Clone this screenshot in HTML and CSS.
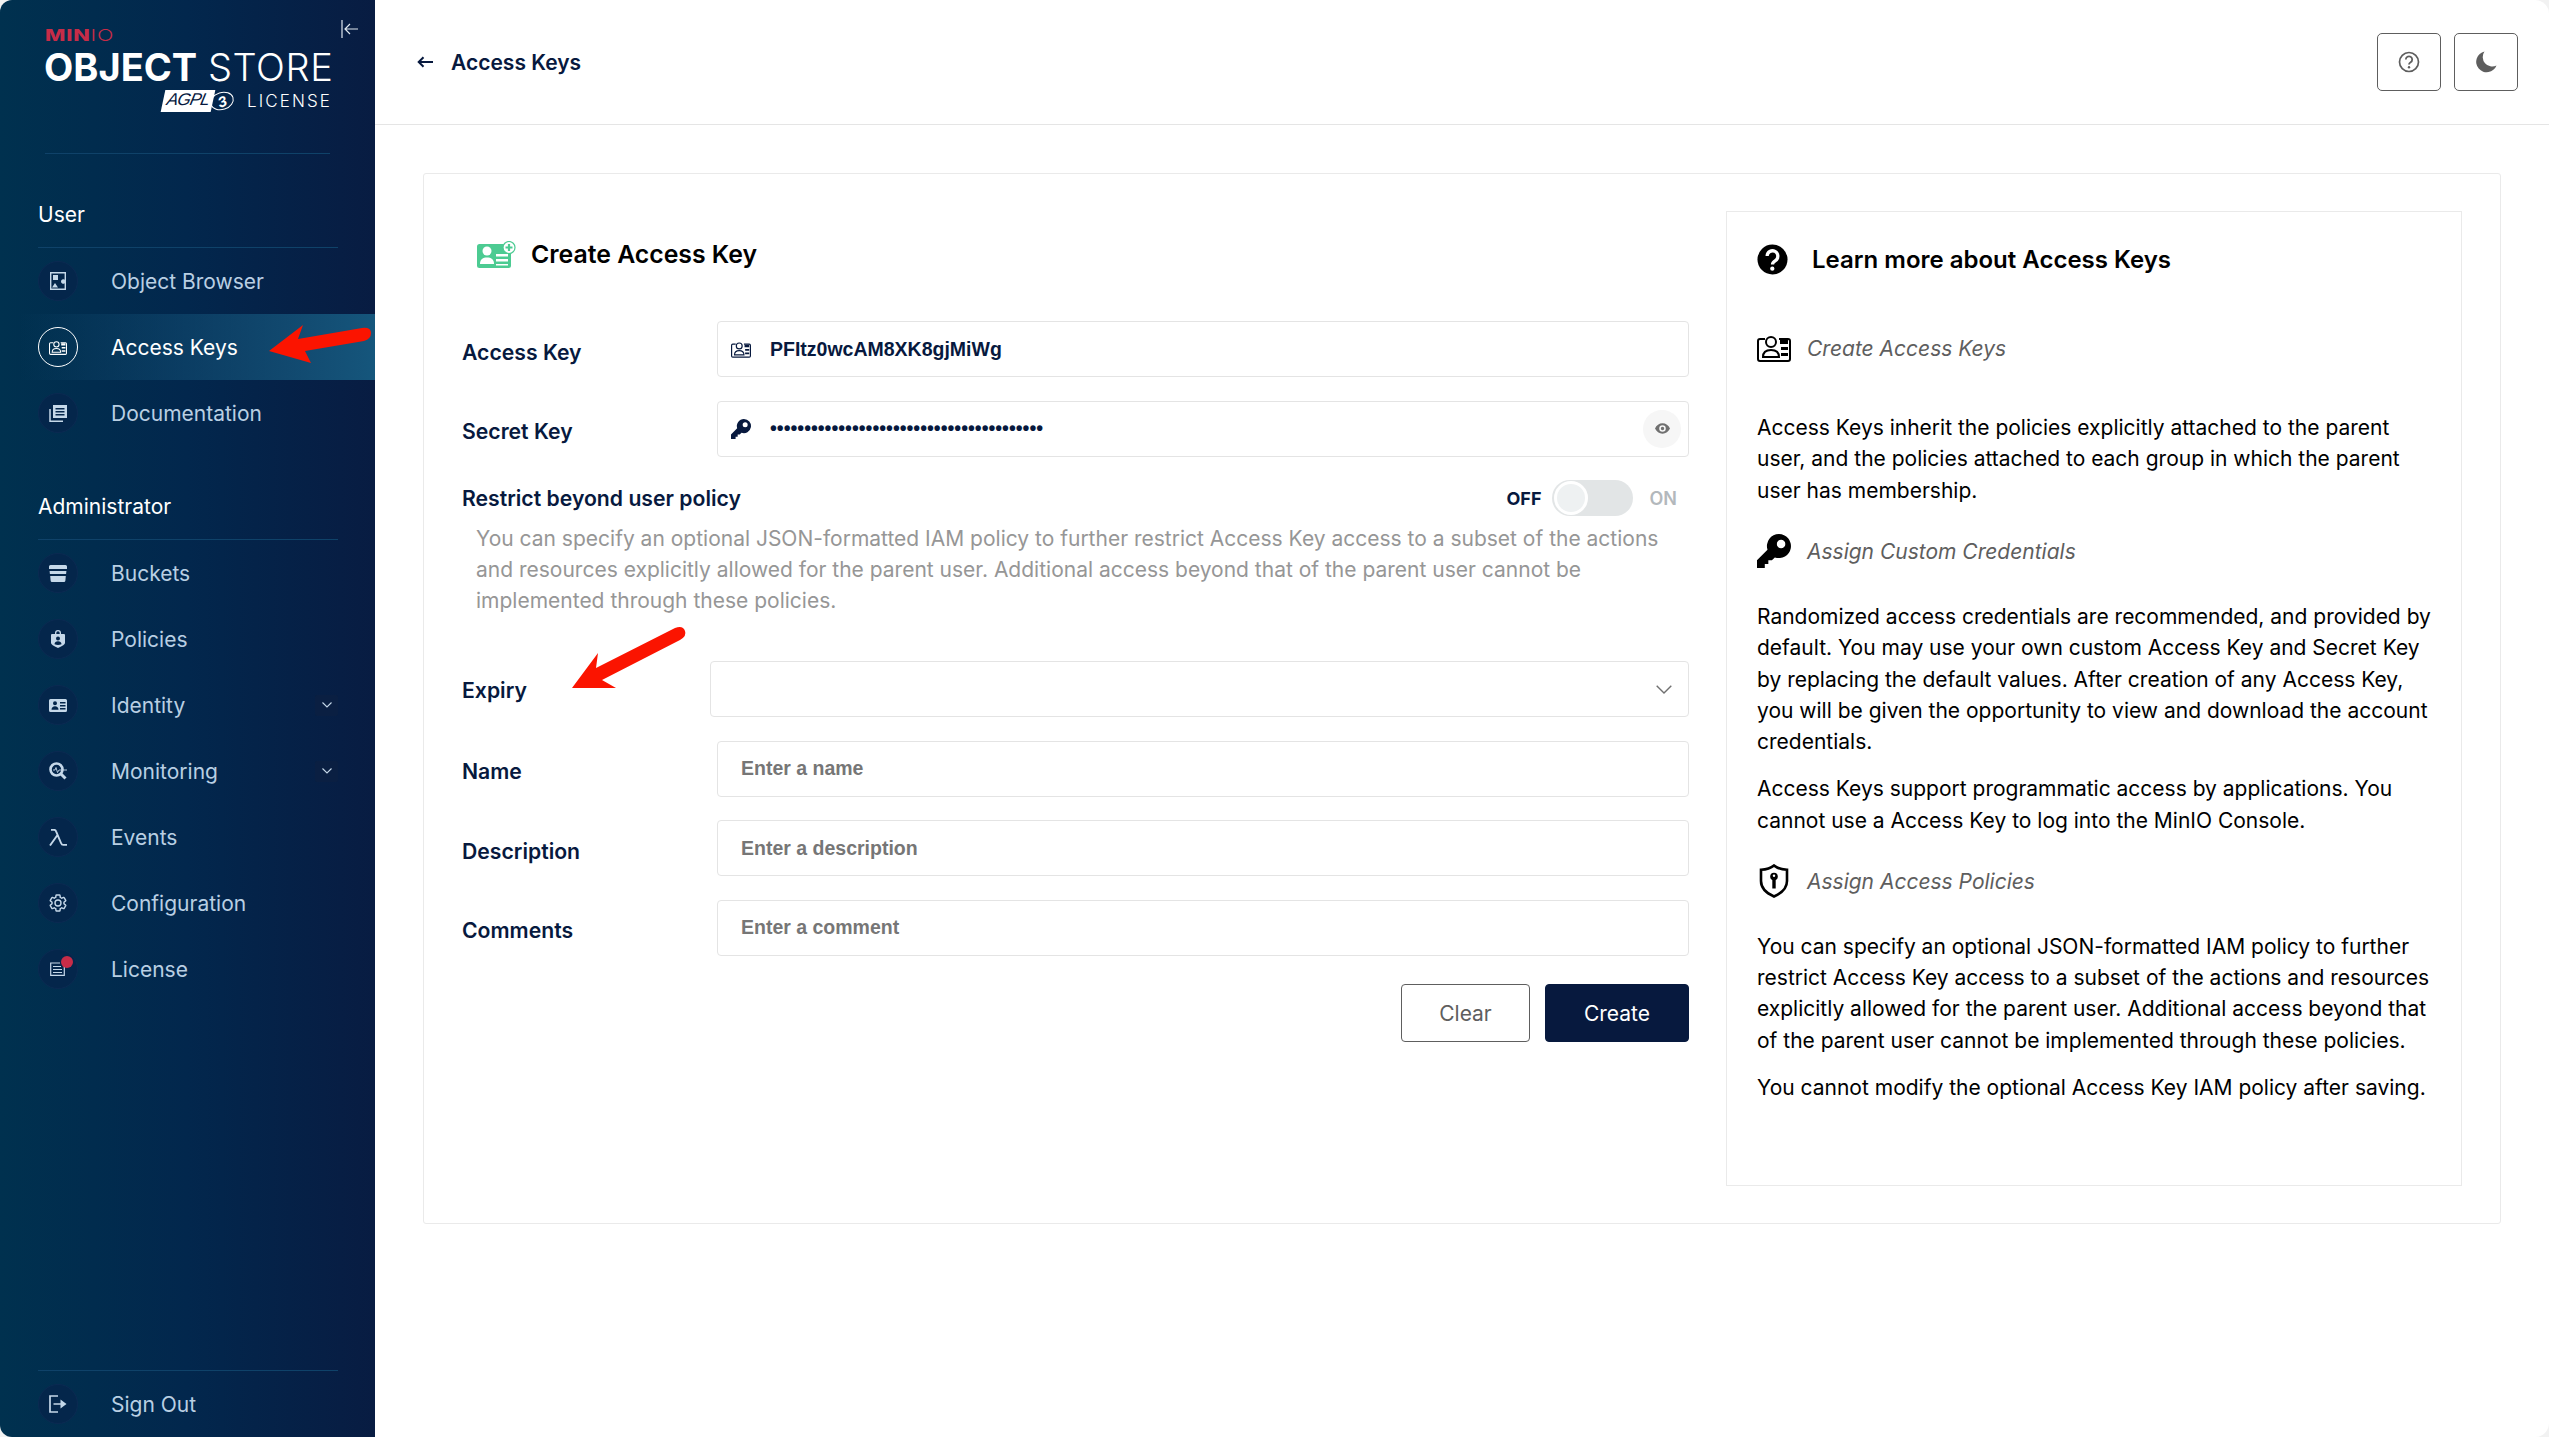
FILE: index.html
```html
<!DOCTYPE html>
<html lang="en">

<head>
    <meta charset="UTF-8">
    <meta name="viewport" content="width=device-width, initial-scale=1.0">
    <title>MinIO Console - Access Keys</title>
    <link rel="stylesheet" href="styles.css">
</head>

<body>
    <svg class="icon-defs" width="0" height="0">
        <symbol id="i-card" viewBox="0 0 34 28">
            <path d="M8 5H3a2 2 0 0 0-2 2v18a2 2 0 0 0 2 2h28a2 2 0 0 0 2-2V7a2 2 0 0 0-2-2h-9" fill="none" stroke="currentColor" stroke-width="2" />
            <circle cx="14" cy="8" r="5" fill="none" stroke="currentColor" stroke-width="2" />
            <path d="M6 23c0-5 3-7 8-7s8 2 8 7z" fill="none" stroke="currentColor" stroke-width="2" />
            <path d="M23 6h8v4h-8zM24 13h7v3h-7zM24 19h7v3h-7z" fill="currentColor" />
        </symbol>
        <symbol id="i-key" viewBox="0 0 24 24">
            <path fill="currentColor" fill-rule="evenodd" d="M15.5 0a8.5 8.5 0 1 1-2.9 16.5L10.5 18.6H8v2.6H5.5V24H0v-5.5l7.4-7.4A8.5 8.5 0 0 1 15.5 0zM17 4a3 3 0 1 0 0 6 3 3 0 0 0 0-6z" />
        </symbol>
    </svg>

    <div class="app">
        <aside class="sidebar">
            <svg class="collapse" viewBox="0 0 18 18" width="18" height="18">
                <path d="M1 0v18M17 9H4M9 4L4 9l5 5" fill="none" stroke="currentColor" stroke-width="1.2" />
            </svg>
            <div class="logo">
                <div class="logo-minio"><b>MIN</b>IO</div>
                <div class="logo-name"><b>OBJECT</b> <span>STORE</span></div>
                <div class="logo-license">
                    <span class="agpl"><span>AGPL</span></span>
                    <span class="agpl-three">3</span>
                    <span class="license-text">LICENSE</span>
                </div>
            </div>

            <div class="menu-title">User</div>
            <a class="nav-item">
                <span class="nav-icon">
                    <svg viewBox="0 0 16 18" width="16" height="18">
                        <path d="M.7.7h14.6v16.6H.7z" fill="none" stroke="currentColor" stroke-width="1.4" />
                        <path d="M3 3h5v5H3zM11 9.500a2.300 2.300 0 1 1 0 .1zM5 11l3 4.500H2z" fill="currentColor" />
                    </svg>
                </span>
                Object Browser
            </a>
            <a class="nav-item active">
                <span class="nav-icon">
                    <svg width="18" height="15">
                        <use href="#i-card" />
                    </svg>
                </span>
                Access Keys
            </a>
            <a class="nav-item">
                <span class="nav-icon">
                    <svg viewBox="0 0 18 18" width="18" height="18">
                        <path d="M1 5v12.200h13" fill="none" stroke="currentColor" stroke-width="1.500" />
                        <path fill="currentColor" fill-rule="evenodd" d="M4 1h14v13H4zM6.500 4v1.500h9V4zM6.500 7v1.500h9V7zM6.500 10v1.500h9V10z" />
                    </svg>
                </span>
                Documentation
            </a>

            <div class="menu-title admin-title">Administrator</div>
            <a class="nav-item">
                <span class="nav-icon">
                    <svg viewBox="0 0 18 17" width="18" height="17">
                        <path fill="currentColor" d="M0 1.500Q0 0 1.500 0h15Q18 0 18 1.500V4H0zM.6 6h16.800l-.3 3H.9zM1.200 11h15.600l-.4 4.500Q16.300 17 15 17H3q-1.300 0-1.400-1.500z" />
                    </svg>
                </span>
                Buckets
            </a>
            <a class="nav-item">
                <span class="nav-icon">
                    <svg viewBox="0 0 14 18" width="14" height="18">
                        <path fill="currentColor" fill-rule="evenodd" d="M4 4V3a3 3 0 0 1 6 0v1h3q1 0 1 1v8q0 2-7 5-7-3-7-5V5q0-1 1-1zm1.300 0h3.400V3a1.700 1.700 0 0 0-3.400 0zM7 6.500a2 2 0 1 0 0 4 2 2 0 0 0 0-4zM3.500 14.300q3.500 1.500 7 0c0-2-1.500-3-3.500-3s-3.500 1-3.500 3z" />
                    </svg>
                </span>
                Policies
            </a>
            <a class="nav-item">
                <span class="nav-icon">
                    <svg viewBox="0 0 18 13" width="18" height="13">
                        <path fill="currentColor" fill-rule="evenodd" d="M1.500 0h15Q18 0 18 1.500v10q0 1.500-1.500 1.500h-15Q0 13 0 11.500v-10Q0 0 1.500 0zM6 2.200a2 2 0 1 0 0 4 2 2 0 0 0 0-4zM2.500 10.800h7c0-2-1.500-3.500-3.500-3.500s-3.500 1.500-3.500 3.500zM11 3v1.500h5.500V3zM11 6v1.500h5.500V6zM11 9v1.500h5.500V9z" />
                    </svg>
                </span>
                Identity
                <span class="nav-chevron">
                    <svg viewBox="0 0 10 6" width="10" height="6">
                        <path d="M.5.500L5 5 9.500.500" fill="none" stroke="currentColor" stroke-width="1.100" />
                    </svg>
                </span>
            </a>
            <a class="nav-item">
                <span class="nav-icon">
                    <svg viewBox="0 0 18 18" width="18" height="18">
                        <circle cx="7.500" cy="7.500" r="6" fill="none" stroke="currentColor" stroke-width="2.600" />
                        <path d="M11.500 11.500l5 5" stroke="currentColor" stroke-width="3" />
                        <path d="M4 8h2l1-2.500 1.500 5L10 8h8" fill="none" stroke="currentColor" stroke-width=".9" />
                    </svg>
                </span>
                Monitoring
                <span class="nav-chevron">
                    <svg viewBox="0 0 10 6" width="10" height="6">
                        <path d="M.5.500L5 5 9.500.500" fill="none" stroke="currentColor" stroke-width="1.100" />
                    </svg>
                </span>
            </a>
            <a class="nav-item">
                <span class="nav-icon">
                    <svg viewBox="0 0 18 17" width="18" height="17">
                        <path d="M2 .8h3q1.500 0 2.200 1.800L12 14q.7 1.900 2.200 1.900H18M8.500 6L1 16.500" fill="none" stroke="currentColor" stroke-width="1.900" />
                    </svg>
                </span>
                Events
            </a>
            <a class="nav-item">
                <span class="nav-icon">
                    <svg viewBox="0 0 24 24" width="20" height="20">
                        <path fill="none" stroke="currentColor" stroke-width="1.700" d="M19.140 12.940c.04-.3.06-.61.06-.94 0-.32-.02-.64-.07-.94l2.030-1.580c.18-.14.23-.41.12-.61l-1.920-3.320c-.12-.22-.37-.29-.59-.22l-2.390.96c-.5-.38-1.030-.7-1.620-.94l-.36-2.540c-.04-.24-.24-.41-.48-.41h-3.840c-.24 0-.43.17-.47.41l-.36 2.540c-.59.24-1.130.57-1.620.94l-2.390-.96c-.22-.08-.47 0-.59.22L2.740 8.870c-.12.21-.08.47.12.61l2.030 1.580c-.05.3-.09.63-.09.94s.02.64.07.94l-2.030 1.580c-.18.14-.23.41-.12.61l1.920 3.320c.12.22.37.29.59.22l2.390-.96c.5.38 1.030.7 1.620.94l.36 2.540c.05.24.24.41.48.41h3.840c.24 0 .44-.17.47-.41l.36-2.540c.59-.24 1.130-.56 1.620-.94l2.390.96c.22.08.47 0 .59-.22l1.920-3.320c.12-.22.07-.47-.12-.61l-2.010-1.580zM12 15.600c-1.980 0-3.600-1.620-3.600-3.600s1.620-3.600 3.600-3.600 3.600 1.620 3.600 3.600-1.620 3.600-3.600 3.600z" />
                    </svg>
                </span>
                Configuration
            </a>
            <a class="nav-item">
                <span class="nav-icon">
                    <svg viewBox="0 0 16 14" width="16" height="14">
                        <path d="M10 1H.7v12.300h13.600V5M3 4.500h8M3 7.500h9M3 10.500h9" fill="none" stroke="currentColor" stroke-width="1.200" />
                    </svg>
                    <span class="nav-badge"></span>
                </span>
                License
            </a>

            <div class="sidebar-footer">
                <a class="nav-item">
                    <span class="nav-icon">
                        <svg viewBox="0 0 18 18" width="18" height="18">
                            <path d="M9 1H1v16h8M4.500 9H15" fill="none" stroke="currentColor" stroke-width="1.700" />
                            <path d="M11.500 4.500L17.500 9l-6 4.500z" fill="currentColor" />
                        </svg>
                    </span>
                    Sign Out
                </a>
            </div>
        </aside>

        <main class="main">
            <header class="page-header">
                <svg class="back-arrow" viewBox="0 0 16 12" width="16" height="12">
                    <path d="M16 6H2M6.500 1.200L1.700 6l4.800 4.800" fill="none" stroke="currentColor" stroke-width="2" />
                </svg>
                <span class="page-title">Access Keys</span>
                <div class="header-actions">
                    <button class="icon-button">
                        <svg viewBox="0 0 22 22" width="22" height="22">
                            <circle cx="11" cy="11" r="9.500" fill="none" stroke="currentColor" stroke-width="1.700" />
                            <path d="M7.800 8.500a3.200 3.200 0 1 1 4.800 2.800c-1 .6-1.600 1.100-1.600 2.300" fill="none" stroke="currentColor" stroke-width="1.800" />
                            <circle cx="11" cy="16.300" r="1.200" fill="currentColor" />
                        </svg>
                    </button>
                    <button class="icon-button">
                        <svg viewBox="0 0 22 22" width="22" height="22">
                            <path d="M9.500 .5A10.500 10.500 0 1 0 21.500 14.500 9.500 9.500 0 0 1 9.500 .5z" fill="currentColor" />
                        </svg>
                    </button>
                </div>
            </header>

            <section class="content">
                <div class="panel">
                    <form class="key-form">
                        <div class="form-title">
                            <svg viewBox="0 0 39 27" width="39" height="27">
                                <rect y="3" width="34" height="24" rx="2.500" fill="#4ccb92" />
                                <circle cx="10" cy="10" r="4.500" fill="#fff" />
                                <path d="M3 23c0-5 3-6.500 7-6.500s7 1.500 7 6.500z" fill="#fff" />
                                <path d="M19 13h12v2.500H19zM19 18h12v2.500H19zM19 23h12v1.500H19z" fill="#fff" />
                                <circle cx="32" cy="6.500" r="6" fill="#fff" stroke="#4ccb92" stroke-width="1.200" />
                                <path d="M32 3v7M28.500 6.500h7" stroke="#4ccb92" stroke-width="2.200" />
                            </svg>
                            Create Access Key
                        </div>

                        <div class="form-row">
                            <label>Access Key</label>
                            <div class="field">
                                <svg class="field-icon" width="20" height="17">
                                    <use href="#i-card" />
                                </svg>
                                <span class="field-value">PFItz0wcAM8XK8gjMiWg</span>
                            </div>
                        </div>
                        <div class="form-row">
                            <label>Secret Key</label>
                            <div class="field">
                                <svg class="field-icon" width="20" height="20">
                                    <use href="#i-key" />
                                </svg>
                                <span class="field-value">••••••••••••••••••••••••••••••••••••••••</span>
                                <span class="eye">
                                    <svg viewBox="0 0 16 11" width="15" height="11">
                                        <path fill-rule="evenodd" fill="currentColor" d="M8 0c3.500 0 6.500 2.200 8 5.500C14.500 8.800 11.500 11 8 11S1.500 8.800 0 5.500C1.500 2.200 4.500 0 8 0zm0 2a3.500 3.500 0 1 0 0 7 3.500 3.500 0 0 0 0-7zm0 1.700a1.800 1.800 0 1 1 0 3.600 1.800 1.800 0 0 1 0-3.600z" />
                                    </svg>
                                </span>
                            </div>
                        </div>

                        <div class="restrict-row">
                            <span class="restrict-label">Restrict beyond user policy</span>
                            <span class="switch-off">OFF</span>
                            <span class="switch"><span class="switch-knob"></span></span>
                            <span class="switch-on">ON</span>
                        </div>
                        <p class="restrict-text">You can specify an optional JSON-formatted IAM policy to further restrict Access Key access to a subset of the actions and resources explicitly allowed for the parent user. Additional access beyond that of the parent user cannot be implemented through these policies.</p>

                        <div class="form-row expiry-row">
                            <label>Expiry</label>
                            <div class="field">
                                <svg class="select-arrow" viewBox="0 0 16 9" width="16" height="9">
                                    <path d="M.7.7L8 8l7.300-7.300" fill="none" stroke="currentColor" stroke-width="1.400" />
                                </svg>
                            </div>
                        </div>
                        <div class="form-row">
                            <label>Name</label>
                            <div class="field"><span class="placeholder">Enter a name</span></div>
                        </div>
                        <div class="form-row">
                            <label>Description</label>
                            <div class="field"><span class="placeholder">Enter a description</span></div>
                        </div>
                        <div class="form-row">
                            <label>Comments</label>
                            <div class="field"><span class="placeholder">Enter a comment</span></div>
                        </div>

                        <div class="form-buttons">
                            <button type="button" class="btn btn-clear">Clear</button>
                            <button type="button" class="btn btn-create">Create</button>
                        </div>
                    </form>

                    <aside class="help">
                        <div class="help-title">
                            <svg viewBox="0 0 32 32" width="31" height="31">
                                <circle cx="16" cy="16" r="15.500" fill="#000" />
                                <path d="M10.500 12.500a5.500 5.500 0 1 1 8.500 4.600c-2 1.300-3 2-3 4" fill="none" stroke="#fff" stroke-width="3.400" />
                                <circle cx="15.800" cy="25.500" r="2.200" fill="#fff" />
                            </svg>
                            Learn more about Access Keys
                        </div>

                        <div class="help-sub first">
                            <svg width="34" height="28">
                                <use href="#i-card" />
                            </svg>
                            Create Access Keys
                        </div>
                        <p class="first-text">Access Keys inherit the policies explicitly attached to the parent user, and the policies attached to each group in which the parent user has membership.</p>

                        <div class="help-sub">
                            <svg width="34" height="34">
                                <use href="#i-key" />
                            </svg>
                            Assign Custom Credentials
                        </div>
                        <p>Randomized access credentials are recommended, and provided by default. You may use your own custom Access Key and Secret Key by replacing the default values. After creation of any Access Key, you will be given the opportunity to view and download the account credentials.</p>
                        <p>Access Keys support programmatic access by applications. You cannot use a Access Key to log into the MinIO Console.</p>

                        <div class="help-sub">
                            <svg viewBox="0 0 32 34" width="34" height="34">
                                <path d="M16 1.500c3 2.500 7.500 4 13 4.300V17c0 7-5 12-13 15.500C8 29 3 24 3 17V5.800c5.500-.3 10-1.800 13-4.300z" fill="none" stroke="#000" stroke-width="2.600" />
                                <circle cx="16" cy="12.500" r="3.800" fill="#000" />
                                <path d="M14.300 14h3.400v10.500h-3.400z" fill="#000" />
                                <circle cx="16" cy="11.800" r="1.200" fill="#fff" />
                            </svg>
                            Assign Access Policies
                        </div>
                        <p>You can specify an optional JSON-formatted IAM policy to further restrict Access Key access to a subset of the actions and resources explicitly allowed for the parent user. Additional access beyond that of the parent user cannot be implemented through these policies.</p>
                        <p>You cannot modify the optional Access Key IAM policy after saving.</p>
                    </aside>
                </div>
            </section>
        </main>

        <!-- red markers drawn over the screenshot -->
        <svg class="markers" viewBox="0 0 2549 1437">
            <path fill="#fb1400" d="M269 351L303 325L298 339L362 328Q371 327 371 333Q371 339 364 341L305 351L311 363z" />
            <path fill="#fb1400" d="M572 688L598 653L596 668L675 628Q683 625 685 631Q687 636 680 640L602 680L616 688z" />
        </svg>
    </div>
</body>

</html>
```

FILE: styles.css
```css
* {
    box-sizing: border-box;
}

body {
    margin: 0;
    background-color: #f2f2f2;
    font-family: Inter, "Liberation Sans", sans-serif;
    font-size: 21px;
    color: #07193e;
}

.icon-defs {
    position: absolute;
}

.app {
    position: relative;
    display: flex;
    width: 2549px;
    height: 1437px;
    overflow: hidden;
}

.markers {
    position: absolute;
    top: 0;
    left: 0;
    width: 2549px;
    height: 1437px;
    pointer-events: none;
}

/* sidebar */
.sidebar {
    position: relative;
    display: flex;
    flex-direction: column;
    flex: 0 0 375px;
    min-width: 0;
    background: linear-gradient(90deg, #00314f 0%, #02274d 50%, #081c42 100%);
    border-radius: 12px 0 0 12px;
    color: #b9cfe3;
}

.collapse {
    position: absolute;
    top: 20px;
    left: 341px;
    color: #dfe8f0;
}

.logo {
    height: 154px;
    margin: 0 45px;
    padding-top: 27px;
    border-bottom: 1px solid #0f4269;
    color: #fff;
}

.logo-minio {
    height: 17px;
    font-size: 16px;
    line-height: 17px;
    letter-spacing: .6px;
    font-weight: 300;
    color: #c72c48;
    transform: scaleX(1.35);
    transform-origin: left center;
}

.logo-minio b {
    font-weight: 800;
}

.logo-name {
    height: 42px;
    margin-top: 2px;
    margin-left: -1px;
    font-size: 38px;
    line-height: 42px;
    white-space: nowrap;
}

.logo-name b {
    font-weight: 700;
}

.logo-name span {
    font-weight: 300;
    letter-spacing: .6px;
}

.logo-license {
    display: flex;
    justify-content: flex-end;
    align-items: center;
    height: 24px;
    margin-top: 1px;
}

.agpl {
    display: block;
    width: 50px;
    height: 22px;
    background-color: #fff;
    transform: skewX(-12deg);
    color: #07193e;
    text-align: center;
}

.agpl span {
    display: block;
    font-family: "Liberation Sans", sans-serif;
    font-size: 17px;
    line-height: 20px;
    font-style: italic;
    letter-spacing: -.8px;
}

.agpl-three {
    display: flex;
    align-items: center;
    justify-content: center;
    width: 24px;
    height: 18px;
    margin-left: -3px;
    border: 1px solid #fff;
    border-radius: 50%;
    transform: rotate(-18deg);
    font-size: 14px;
    font-style: italic;
    font-weight: 700;
}

.license-text {
    margin-left: 13px;
    margin-right: -2px;
    font-size: 17px;
    letter-spacing: 2.100px;
    font-weight: 300;
}

.menu-title {
    display: flex;
    align-items: flex-end;
    flex: none;
    width: 300px;
    height: 94px;
    margin-left: 38px;
    padding-bottom: 20px;
    border-bottom: 1px solid #0f4269;
    color: #fff;
    font-size: 21px;
}

.nav-item {
    display: flex;
    align-items: center;
    flex: none;
    height: 66px;
    padding: 0 37px 0 38px;
}

.nav-item.active {
    background: linear-gradient(90deg, rgba(21, 83, 122, 0) 5%, #15567c 100%);
    color: #fff;
}

.nav-icon {
    position: relative;
    display: flex;
    align-items: center;
    justify-content: center;
    width: 40px;
    height: 40px;
    margin-right: 33px;
    border-radius: 50%;
    border: 1px solid #0b2a52;
    background-color: #04264b;
    color: #c5d8e9;
}

.active .nav-icon {
    border-color: #fff;
    background-color: transparent;
    color: #fff;
}

.nav-badge {
    position: absolute;
    top: 6px;
    right: 4px;
    width: 12px;
    height: 12px;
    border-radius: 50%;
    background-color: #c72c48;
}

.nav-chevron {
    display: flex;
    align-items: center;
    justify-content: center;
    width: 23px;
    height: 21px;
    margin-left: auto;
    border-radius: 2px;
    background-color: #0a1f42;
    color: #c5d8e9;
}

.sidebar-footer {
    margin-top: auto;
}

.sidebar-footer::before {
    content: "";
    display: block;
    width: 300px;
    margin-left: 38px;
    border-top: 1px solid #0f4269;
}

/* page header */
.main {
    flex: 1;
    min-width: 0;
    background-color: #fff;
    border-radius: 0 14px 14px 0;
}

.page-header {
    display: flex;
    align-items: center;
    height: 125px;
    padding: 0 31px 0 42px;
    border-bottom: 1px solid #e5e5e5;
}

.back-arrow {
    margin-right: 18px;
}

.page-title {
    font-size: 21px;
    font-weight: 600;
}

.header-actions {
    display: flex;
    gap: 13px;
    margin-left: auto;
}

.icon-button {
    display: flex;
    align-items: center;
    justify-content: center;
    width: 64px;
    height: 58px;
    padding: 0;
    border: 1px solid #5e5e5e;
    border-radius: 5px;
    background-color: #fff;
    color: #5e5e5e;
}

/* form panel */
.content {
    padding: 48px;
}

.panel {
    display: flex;
    gap: 37px;
    height: 1051px;
    padding: 37px 38px 37px 38px;
    border: 1px solid #eaeaea;
    border-radius: 3px;
}

.key-form {
    flex: 0 0 1227px;
}

.form-title {
    display: flex;
    align-items: center;
    gap: 15px;
    height: 86px;
    margin-bottom: 24px;
    padding-left: 15px;
    color: #000;
    font-size: 24.800px;
    font-weight: 600;
}

.form-row {
    display: flex;
    margin-bottom: 23.500px;
}

.form-row label {
    display: flex;
    align-items: center;
    flex: 0 0 255px;
    padding-top: 5px;
    font-size: 21.200px;
    font-weight: 600;
}

.field {
    position: relative;
    display: flex;
    align-items: center;
    flex: 1;
    height: 56px;
    padding-left: 23px;
    border: 1px solid #e4e4e4;
    border-radius: 4px;
}

.field-icon {
    margin-right: 19px;
    margin-left: -10px;
}

.field-value,
.placeholder {
    font-family: "Liberation Sans", sans-serif;
    font-size: 19.500px;
    font-weight: 700;
}

.placeholder {
    color: #767676;
}

.eye {
    position: absolute;
    top: 8px;
    right: 7px;
    display: flex;
    align-items: center;
    justify-content: center;
    width: 38px;
    height: 38px;
    border-radius: 50%;
    background-color: #f6f6f6;
    color: #707070;
}

.restrict-row {
    display: flex;
    align-items: center;
    height: 36px;
    font-size: 21.200px;
    font-weight: 600;
}

.restrict-label {
    margin-right: auto;
}

.switch-off {
    font-size: 18px;
    font-weight: 700;
}

.switch {
    position: relative;
    width: 81px;
    height: 36px;
    margin: 0 16px 0 11px;
    border-radius: 18px;
    background-color: #e2e5e6;
}

.switch-knob {
    position: absolute;
    top: 1px;
    left: 2px;
    width: 34px;
    height: 34px;
    border: 3px solid #fff;
    border-radius: 50%;
    background-color: #eef1f2;
}

.switch-on {
    margin-right: 12px;
    font-size: 18px;
    color: #b3b8bc;
}

.restrict-text {
    margin: 6.500px 0 0;
    padding-left: 14px;
    font-size: 21px;
    line-height: 31.400px;
    color: #969696;
}

.expiry-row {
    margin-top: 44.500px;
}

.expiry-row label {
    flex-basis: 248px;
    padding-top: 2px;
}

.select-arrow {
    position: absolute;
    right: 16px;
    top: 23px;
    color: #707070;
}

.form-buttons {
    display: flex;
    justify-content: flex-end;
    gap: 15px;
    margin-top: 28.500px;
}

.btn {
    height: 58px;
    border-radius: 4px;
    font-family: inherit;
    font-size: 21px;
}

.btn-clear {
    width: 129px;
    border: 1px solid #5e5e5e;
    background-color: #fff;
    color: #5e5e5e;
}

.btn-create {
    width: 144px;
    border: 1px solid #07193e;
    background-color: #07193e;
    color: #fff;
}

/* help box */
.help {
    flex: 1;
    padding: 0 26px 0 30px;
    border: 1px solid #eaeaea;
    color: #000;
}

.help-title {
    display: flex;
    align-items: center;
    gap: 24px;
    height: 31px;
    margin-top: 32px;
    font-size: 24px;
    font-weight: 600;
}

.help-sub {
    display: flex;
    align-items: center;
    gap: 16px;
    height: 32px;
    margin-top: 29px;
    font-style: italic;
    color: #5e5e5e;
}

.help-sub svg {
    color: #000;
    flex: none;
}

.help-sub.first {
    margin-top: 57px;
}

.help p {
    margin: 15.500px 0 0;
    line-height: 31.400px;
}

.help-sub + p {
    margin-top: 33.500px;
}

.help-sub + p.first-text {
    margin-top: 48px;
}
```
